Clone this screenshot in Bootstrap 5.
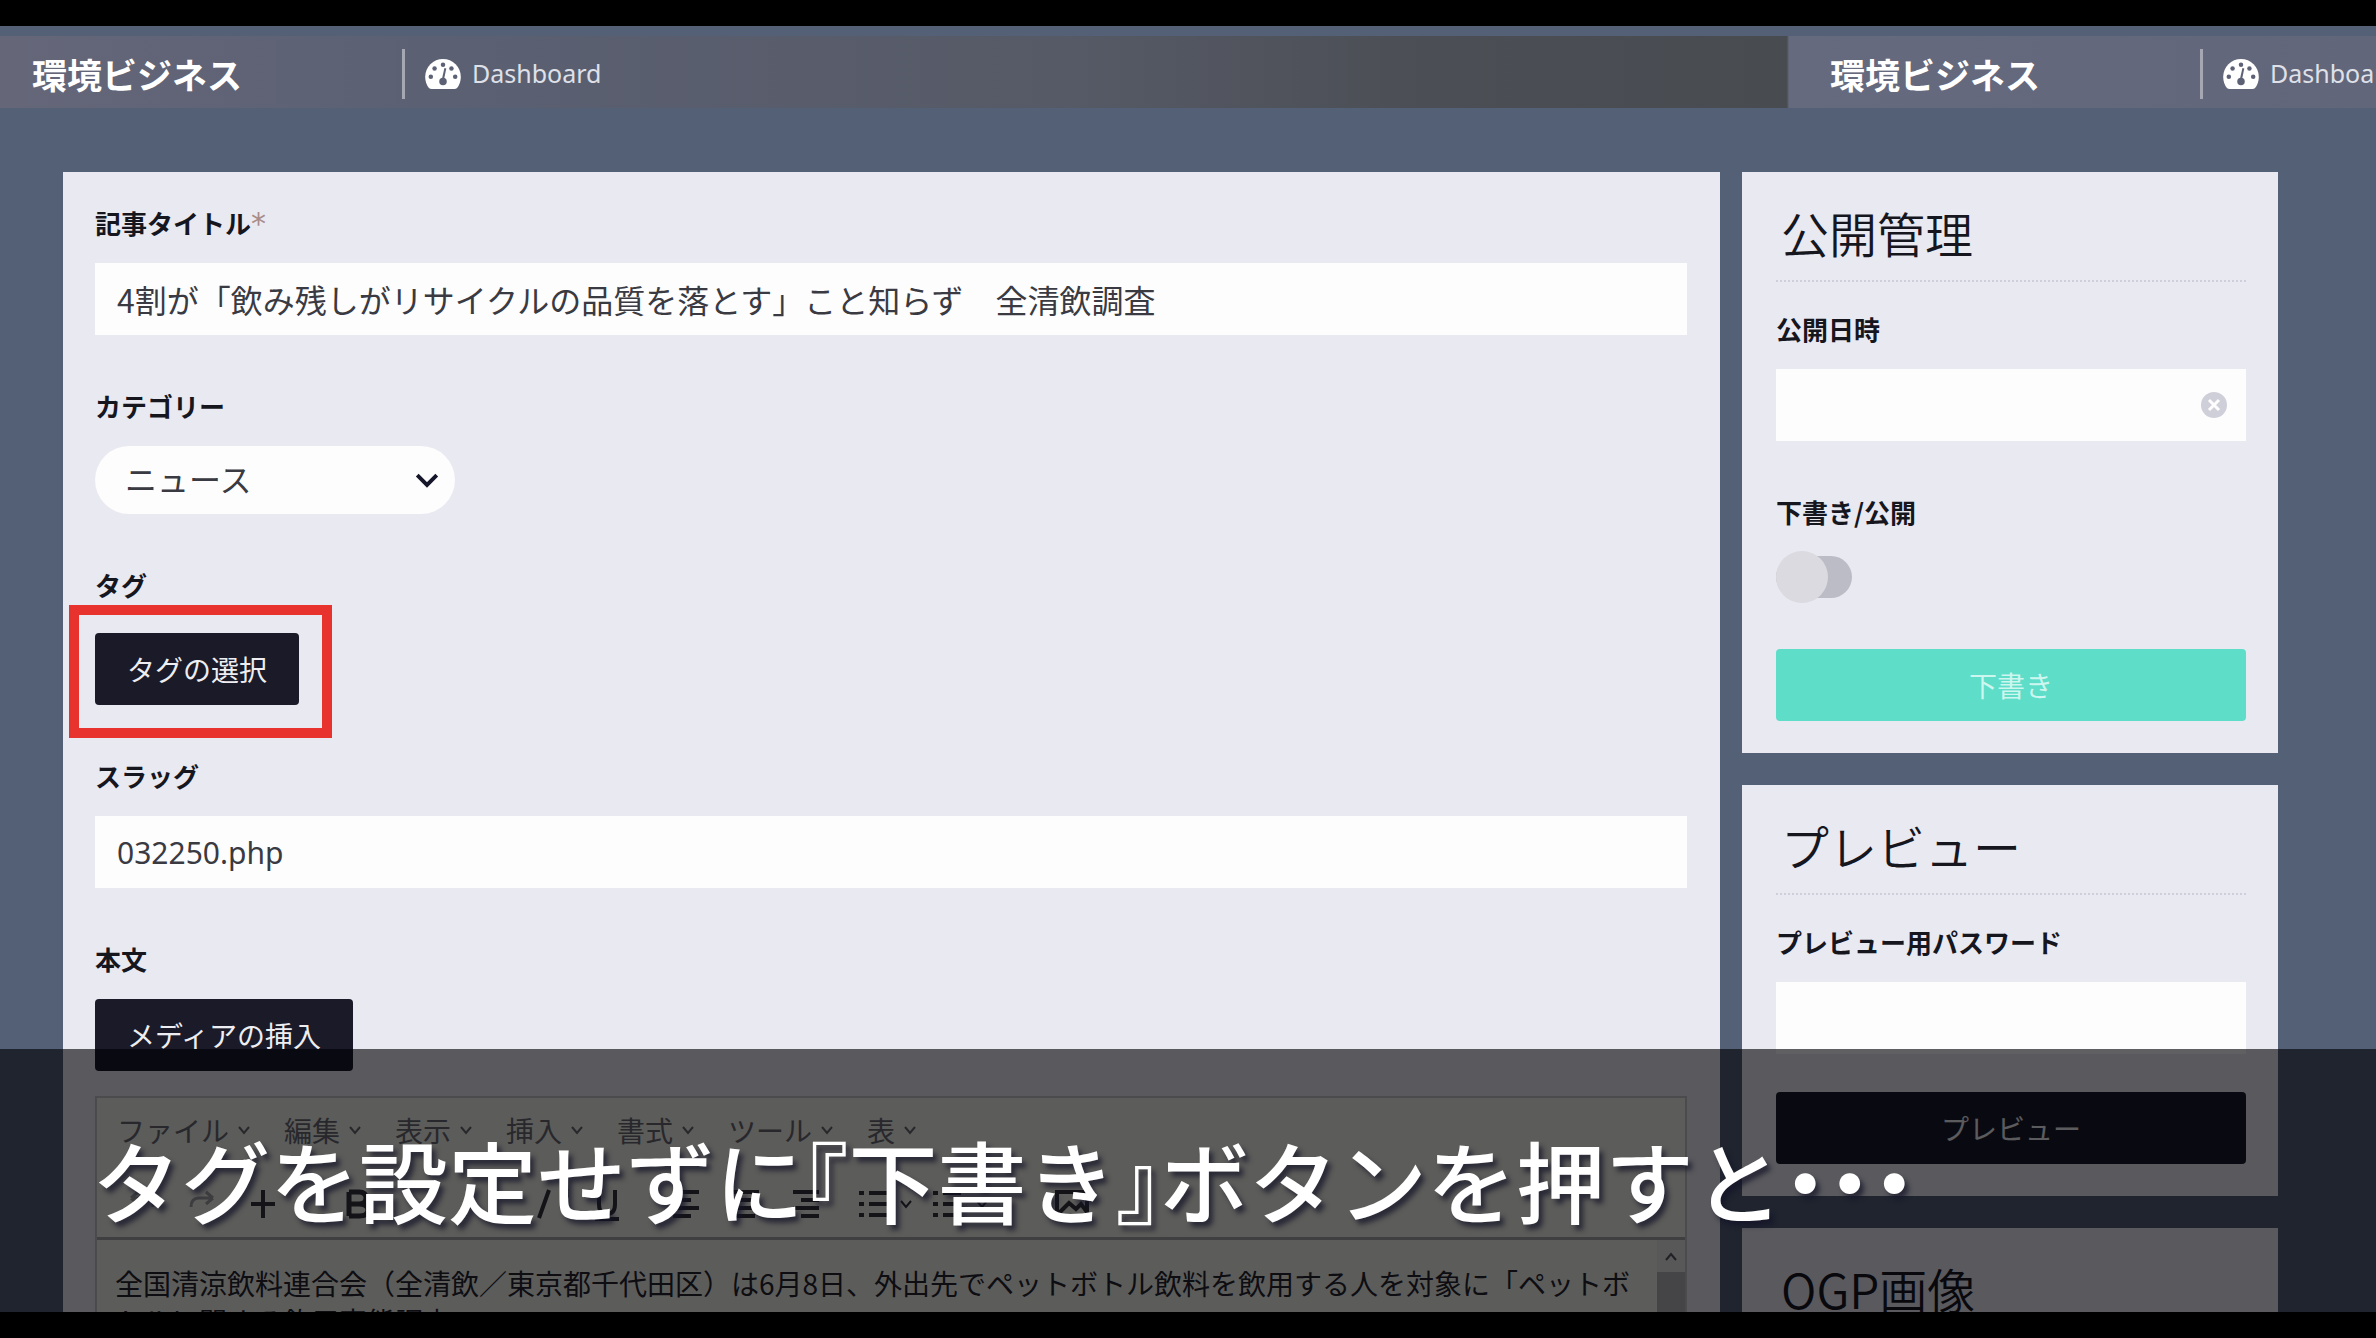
<!DOCTYPE html>
<html lang="ja">
<head>
<meta charset="utf-8">
<meta name="viewport" content="width=device-width, initial-scale=1">
<title>環境ビジネス Dashboard</title>
<link href="https://cdn.jsdelivr.net/npm/bootstrap@5.3.0/dist/css/bootstrap.min.css" rel="stylesheet">
<style>
body { background:#000; font-family:"Noto Sans CJK JP","Noto Sans",sans-serif; color:#16161e; }
.stage { height:100vh; padding:26px 0; }
.screen { background:#536076; }
.topbar { margin-top:10px; height:72px; padding-top:4px; background:linear-gradient(90deg,#656779 0,#5b6073 18%,#565a66 45%,#4b4e54 60%,#484b50 75.2%,#666a7e 75.3%,#62667a 100%); }
.brandbox { flex:0 0 1788px; padding-left:32px; }
.brandbox + .brandbox { padding-left:42px; }
.brandname { font-size:35px; line-height:48px; font-weight:700; width:370px; color:#fff; text-decoration:none; }
.dashlink { border-left:3px solid #a5a8b2; height:50px; padding-left:20px; gap:11px; font-family:"Noto Sans",sans-serif; font-size:25px; color:#dfe0e8; text-decoration:none; }
.dashlink svg { width:36px; height:30px; }
.workarea { margin-top:64px; padding:0 98px 0 63px; gap:22px; min-height:0; }
.panel { background:#e9e9f1; }
.mainpanel { padding:33px 33px 0 32px; min-width:0; }
.sidecol { flex:0 0 536px; gap:32px; }
.sidepanel { padding:20px 32px 32px 34px; }
.group { margin-bottom:53px; }
.fieldlabel { display:block; font-size:26px; line-height:36px; font-weight:700; margin:0 0 22px; width:max-content; }
.taggroup .fieldlabel { margin-bottom:30px; }
.required { font-family:"DejaVu Sans",sans-serif; font-weight:400; font-size:30px; line-height:30px; color:#a98c88; }
.form-control.field, .form-select.field { height:72px; border:0; border-radius:0; background-color:#fdfdfe; padding:0 22px; font-size:32px; color:#3a3a42; }
.form-select.field { height:68px; width:360px; border-radius:34px; padding:0 30px 4px; background-image:url("data:image/svg+xml,%3csvg xmlns='http://www.w3.org/2000/svg' viewBox='0 0 16 16'%3e%3cpath fill='none' stroke='%2316162a' stroke-width='2.4' d='m2 5 6 6 6-6'/%3e%3c/svg%3e"); background-size:26px; background-position:right 15px center; }
.form-control.slug { font-size:30px; font-family:"Noto Sans",sans-serif; }
.actionbtn { display:block; height:72px; border:0; border-radius:4px; background:#1a1a28; color:#eeeef2; font-size:28px; line-height:40px; padding:0 32px; }
.actionbtn:hover { background:#1a1a28; color:#fff; }
.teal, .teal:hover { background:#5eddc9; color:#cdf6ef; }
.marked { position:relative; width:max-content; }
.marked::after { content:""; position:absolute; inset:-28px -33px -33px -26px; border:10px solid #e8322e; pointer-events:none; }
.panelhead { font-size:48px; line-height:80px; font-weight:350; margin:0 0 8px; padding-left:5px; }
.panelrule { border-top:2px dotted #cfcfdb; margin-bottom:29px; }
.clearbtn { position:absolute; right:18px; top:22px; width:28px; height:28px; padding:0; border:0; background:none; display:flex; }
.form-check-input.toggler { width:76px; height:42px; margin:26px 0 51px; border:0; border-radius:21px; background:#bcbcc6; appearance:none; position:relative; float:none; display:block; }
.form-check-input.toggler::before { content:""; position:absolute; left:0; top:-5px; width:52px; height:52px; border-radius:50%; background:#dadae0; }
.pwgroup { margin-bottom:38px; }
.editor { border:2px solid #c4c4c4; background:#f1f1e8; color:#24242c; margin-top:25px; }
.menus { padding:12px 20px 0; gap:33px; font-size:28px; line-height:40px; }
.menus button { border:0; background:none; padding:0; color:#6a6a70; display:flex; align-items:center; gap:8px; }
.menus svg { width:14px; height:9px; }
.tools { height:90px; padding:34px 24px 0; border-bottom:3px solid #a6a6a6; }
.tools svg { height:40px; width:1000px; }
.writing { font-size:28px; line-height:38px; height:110px; padding:24px 0 0 18px; white-space:nowrap; }
.scroller { width:28px; margin-top:32px; background:#b6b6b8; }
.scrollwrap { background:#e6e6e2; }
.shade { position:absolute; left:0; right:0; bottom:0; height:263px; background:rgba(0,0,4,.62); }
.caption { font-size:89px; line-height:128px; font-weight:500; color:#fff; margin:0; padding:66px 0 0 92px; font-feature-settings:"halt"; text-shadow:4px 5px 5px rgba(20,20,40,.7); white-space:nowrap; }
</style>
<script src="https://cdn.jsdelivr.net/npm/bootstrap@5.3.0/dist/js/bootstrap.bundle.min.js"></script>
</head>
<body>
<svg class="d-none">
  <symbol id="gauge" viewBox="0 0 38 32"><path fill="#fff" d="M4 31Q0 26 0 19a19 19 0 0 1 38 0q0 7-4 12-1 1-3 1H7q-2 0-3-1z"/><g fill="#5d6176"><circle cx="19" cy="6" r="2.400"/><circle cx="10" cy="10" r="2.400"/><circle cx="28" cy="10" r="2.400"/><circle cx="6" cy="19" r="2.400"/><circle cx="32" cy="19" r="2.400"/><circle cx="19" cy="24" r="4"/><path d="m20.500 9.500 2 .6-2.500 12-2.200-.5z"/></g></symbol>
  <symbol id="caret" viewBox="0 0 14 9"><path d="m2 1 5 6 5-6" fill="none" stroke="#6a6a70" stroke-width="2"/></symbol>
</svg>
<div class="stage overflow-hidden">
 <div class="screen position-relative h-100 overflow-hidden d-flex flex-column">
  <header class="topbar d-flex overflow-hidden flex-shrink-0">
    <div class="brandbox d-flex align-items-center"><a class="brandname" href="#">環境ビジネス</a><a class="dashlink d-flex align-items-center" href="#"><svg><use href="#gauge"/></svg>Dashboard</a></div>
    <div class="brandbox d-flex align-items-center"><a class="brandname" href="#">環境ビジネス</a><a class="dashlink d-flex align-items-center" href="#"><svg><use href="#gauge"/></svg>Dashboard</a></div>
  </header>
  <main class="workarea d-flex flex-grow-1">
    <section class="panel mainpanel flex-grow-1">
      <div class="group">
        <label class="fieldlabel" for="title">記事タイトル<span class="required">*</span></label>
        <input class="form-control field" id="title" value="4割が「飲み残しがリサイクルの品質を落とす」こと知らず　全清飲調査">
      </div>
      <div class="group">
        <label class="fieldlabel" for="cat">カテゴリー</label>
        <select class="form-select field" id="cat"><option>ニュース</option></select>
      </div>
      <div class="group taggroup">
        <label class="fieldlabel" for="tagpick">タグ</label>
        <div class="marked"><button type="button" class="btn actionbtn" id="tagpick">タグの選択</button></div>
      </div>
      <div class="group">
        <label class="fieldlabel" for="slug">スラッグ</label>
        <input class="form-control field slug" id="slug" value="032250.php">
      </div>
      <label class="fieldlabel" for="media">本文</label>
      <button type="button" class="btn actionbtn" id="media">メディアの挿入</button>
      <div class="editor">
        <div class="menus d-flex">
          <button type="button">ファイル<svg><use href="#caret"/></svg></button>
          <button type="button">編集<svg><use href="#caret"/></svg></button>
          <button type="button">表示<svg><use href="#caret"/></svg></button>
          <button type="button">挿入<svg><use href="#caret"/></svg></button>
          <button type="button">書式<svg><use href="#caret"/></svg></button>
          <button type="button">ツール<svg><use href="#caret"/></svg></button>
          <button type="button">表<svg><use href="#caret"/></svg></button>
        </div>
        <div class="tools">
          <svg viewBox="0 0 1000 40" fill="none" stroke="#33333c" stroke-width="4">
            <path d="M10 14h14q8 0 8 9M10 14l7-6M10 14l7 6M92 14H78q-8 0-8 9M92 14l-7-6M92 14l-7 6" stroke="#a0a0a4" stroke-width="3"/>
            <path d="M142 6v28M130 20h24"/>
            <path d="M228 8v24M228 8h10q7 0 7 6t-7 6h-10M238 20q9 0 9 6t-9 6h-10" stroke-width="5"/>
            <path d="m428 6-10 28M478 6v14q0 10 8 10t8-10V6M474 35h24" />
            <path d="M552 8h26M552 16h18M552 24h26M552 32h18M612 8h26M616 16h18M612 24h26M616 32h18M672 8h26M680 16h18M672 24h26M680 32h18"/>
            <path d="M738 9h5M738 20h5M738 31h5M748 9h18M748 20h18M748 31h18M812 9h5M812 20h5M812 31h5M822 9h18M822 20h18M822 31h18"/>
            <path d="m780 17 5 6 5-6M856 17l5 6 5-6" stroke-width="2"/>
            <path d="M936 8h30v24h-30zM938 29l10-10 7 6 5-5 6 8"/>
          </svg>
        </div>
        <div class="d-flex justify-content-between overflow-hidden">
          <div class="writing">全国清涼飲料連合会（全清飲／東京都千代田区）は6月8日、外出先でペットボトル飲料を飲用する人を対象に「ペットボ<br>トルに関する飲用実態調査」</div>
          <div class="scrollwrap d-flex flex-column position-relative">
            <div class="scroller flex-grow-1"></div>
            <svg class="position-absolute top-0 start-0 m-2" width="12" height="16"><path d="m1 12 5-6 5 6" fill="none" stroke="#55555c" stroke-width="2"/></svg>
          </div>
        </div>
      </div>
    </section>
    <aside class="sidecol d-flex flex-column">
      <section class="panel sidepanel">
        <h2 class="panelhead">公開管理</h2>
        <div class="panelrule"></div>
        <div class="group">
          <label class="fieldlabel" for="pubdate">公開日時</label>
          <div class="position-relative">
            <input class="form-control field" id="pubdate">
            <button type="button" class="clearbtn" aria-label="クリア"><svg width="28" height="28" viewBox="0 0 28 28"><circle cx="14" cy="14" r="13" fill="#cfcfda"/><path d="m9 9 10 10M19 9 9 19" stroke="#fdfdfe" stroke-width="3"/></svg></button>
          </div>
        </div>
        <label class="fieldlabel" for="pubstate">下書き/公開</label>
        <input type="checkbox" class="form-check-input toggler" id="pubstate">
        <button type="button" class="btn actionbtn teal w-100">下書き</button>
      </section>
      <section class="panel sidepanel">
        <h2 class="panelhead">プレビュー</h2>
        <div class="panelrule"></div>
        <div class="pwgroup">
          <label class="fieldlabel" for="pw">プレビュー用パスワード</label>
          <input class="form-control field" id="pw">
        </div>
        <button type="button" class="btn actionbtn w-100">プレビュー</button>
      </section>
      <section class="panel sidepanel pb-0">
        <h2 class="panelhead">OGP画像</h2>
      </section>
    </aside>
  </main>
  <div class="shade"><p class="caption">タグを設定せずに『下書き』ボタンを押すと・・・</p></div>
 </div>
</div>
</body>
</html>
